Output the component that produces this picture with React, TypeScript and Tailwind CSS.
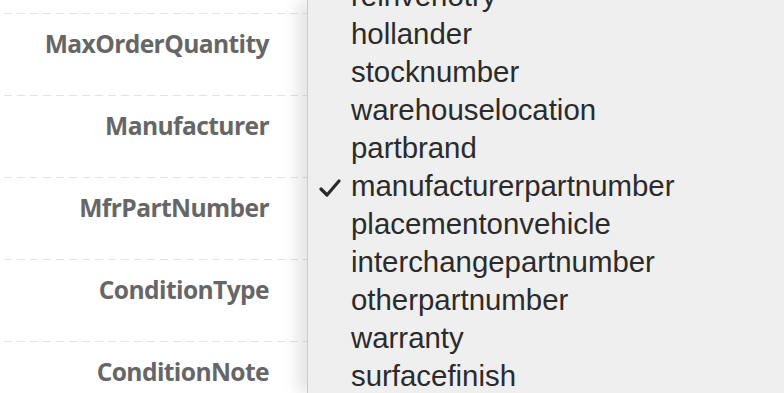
const labels = [
  "MaxOrderQuantity",
  "Manufacturer",
  "MfrPartNumber",
  "ConditionType",
  "ConditionNote",
];

const options = [
  "reinvenotry",
  "hollander",
  "stocknumber",
  "warehouselocation",
  "partbrand",
  "manufacturerpartnumber",
  "placementonvehicle",
  "interchangepartnumber",
  "otherpartnumber",
  "warranty",
  "surfacefinish",
];

export default function App() {
  return (
    <div className="relative w-[784px] h-[393px] overflow-hidden bg-white">
      {/* field labels */}
      <div className="w-[307px] pt-[13px] pl-[4px]">
        {labels.map((label) => (
          <div key={label} className="h-[82px]">
            <div className="h-px bg-[repeating-linear-gradient(to_right,#e3e3e3_0_8px,transparent_8px_13px)]" />
            <div
              className="pt-[14px] pr-[38px] text-right text-[24.6px] leading-[32px] font-bold text-[#666666]"
              style={{ fontFamily: '"Open Sans", sans-serif', letterSpacing: "-0.6px" }}
            >
              {label}
            </div>
          </div>
        ))}
      </div>

      {/* open select menu */}
      <div className="absolute left-[307px] top-0 bottom-0 right-0 bg-[#efefef] border-l border-[#c9c9c9] shadow-[-10px_0_14px_rgba(0,0,0,0.10)]">
        <ul
          className="mt-[-23px] text-[29.4px] leading-[38px] text-[#2b2b2b]"
          style={{ fontFamily: '"Liberation Sans", Arial, sans-serif' }}
        >
          {options.map((opt) => (
            <li key={opt} className="relative pl-[43px] whitespace-nowrap">
              {opt === "manufacturerpartnumber" && (
                <svg
                  className="absolute left-[11px] top-[12px]"
                  width="22"
                  height="18"
                  viewBox="0 0 22 18"
                >
                  <path
                    d="M2 10 L8 16 L20 2"
                    fill="none"
                    stroke="#2b2b2b"
                    strokeWidth="3.2"
                    strokeLinecap="round"
                    strokeLinejoin="round"
                  />
                </svg>
              )}
              {opt}
            </li>
          ))}
        </ul>
      </div>
    </div>
  );
}
